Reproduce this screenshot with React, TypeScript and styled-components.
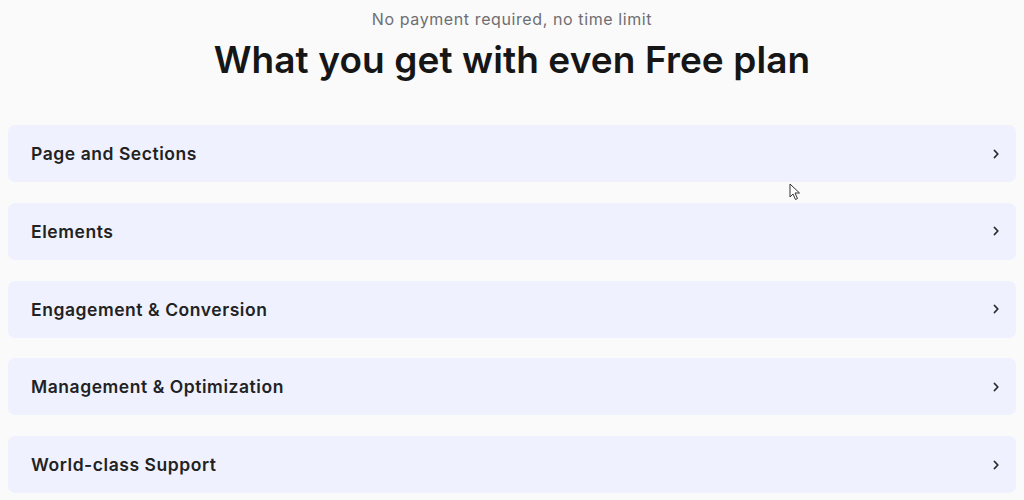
import styled, { createGlobalStyle } from 'styled-components';

const GlobalStyle = createGlobalStyle`
  html, body {
    background: #fafafa;
  }
  body {
    margin: 0;
    font-family: Inter, 'Open Sans', sans-serif;
    color: #1c1c1c;
  }
`;

const Page = styled.section`
  position: relative;
  padding: 0 8px;
  height: 500px;
  overflow: hidden;
`;

const Header = styled.header`
  display: flex;
  flex-direction: column;
  align-items: center;
  padding-top: 8px;
  margin-bottom: 43px;
`;

const Subtitle = styled.p`
  margin: 0;
  font-size: 16px;
  line-height: 22px;
  letter-spacing: 0.6px;
  color: #6e6e72;
`;

const Title = styled.h2`
  margin: 8px 0 0;
  font-size: 37px;
  line-height: 44px;
  font-weight: 600;
  letter-spacing: 0.1px;
  color: #161616;
`;

const List = styled.ul`
  list-style: none;
  margin: 0;
  padding: 0;
  display: flex;
  flex-direction: column;
  gap: 20.8px;
`;

const Item = styled.li`
  display: flex;
  align-items: center;
  justify-content: space-between;
  height: 57px;
  padding: 0 15px 0 23px;
  background: #eff1fe;
  border-radius: 7px;
`;

const Label = styled.span`
  font-size: 17.5px;
  font-weight: 600;
  letter-spacing: 0.55px;
  color: #222;
`;

const Chevron = styled.svg`
  width: 10px;
  height: 10px;
  color: #2a2a2a;
`;

const Cursor = styled.svg`
  position: absolute;
  left: 789px;
  top: 183px;
  width: 12px;
  height: 18px;
`;

const sections = [
  'Page and Sections',
  'Elements',
  'Engagement & Conversion',
  'Management & Optimization',
  'World-class Support',
];

export default function App() {
  return (
    <>
      <GlobalStyle />
      <Page>
        <Header>
          <Subtitle>No payment required, no time limit</Subtitle>
          <Title>What you get with even Free plan</Title>
        </Header>
        <List>
          {sections.map((s) => (
            <Item key={s}>
              <Label>{s}</Label>
              <Chevron viewBox="0 0 10 10" fill="none">
                <path d="M3.5 1.5 L6.8 5 L3.5 8.5" stroke="currentColor" strokeWidth="1.8" strokeLinecap="round" strokeLinejoin="round" />
              </Chevron>
            </Item>
          ))}
        </List>
        <Cursor viewBox="0 0 12 18">
          <path d="M1 1 L1 14 L4 11 L6.5 16.5 L8.5 15.5 L6 10 L10.5 10 Z" fill="#fff" stroke="#333" strokeWidth="1" strokeLinejoin="round" />
        </Cursor>
      </Page>
    </>
  );
}
